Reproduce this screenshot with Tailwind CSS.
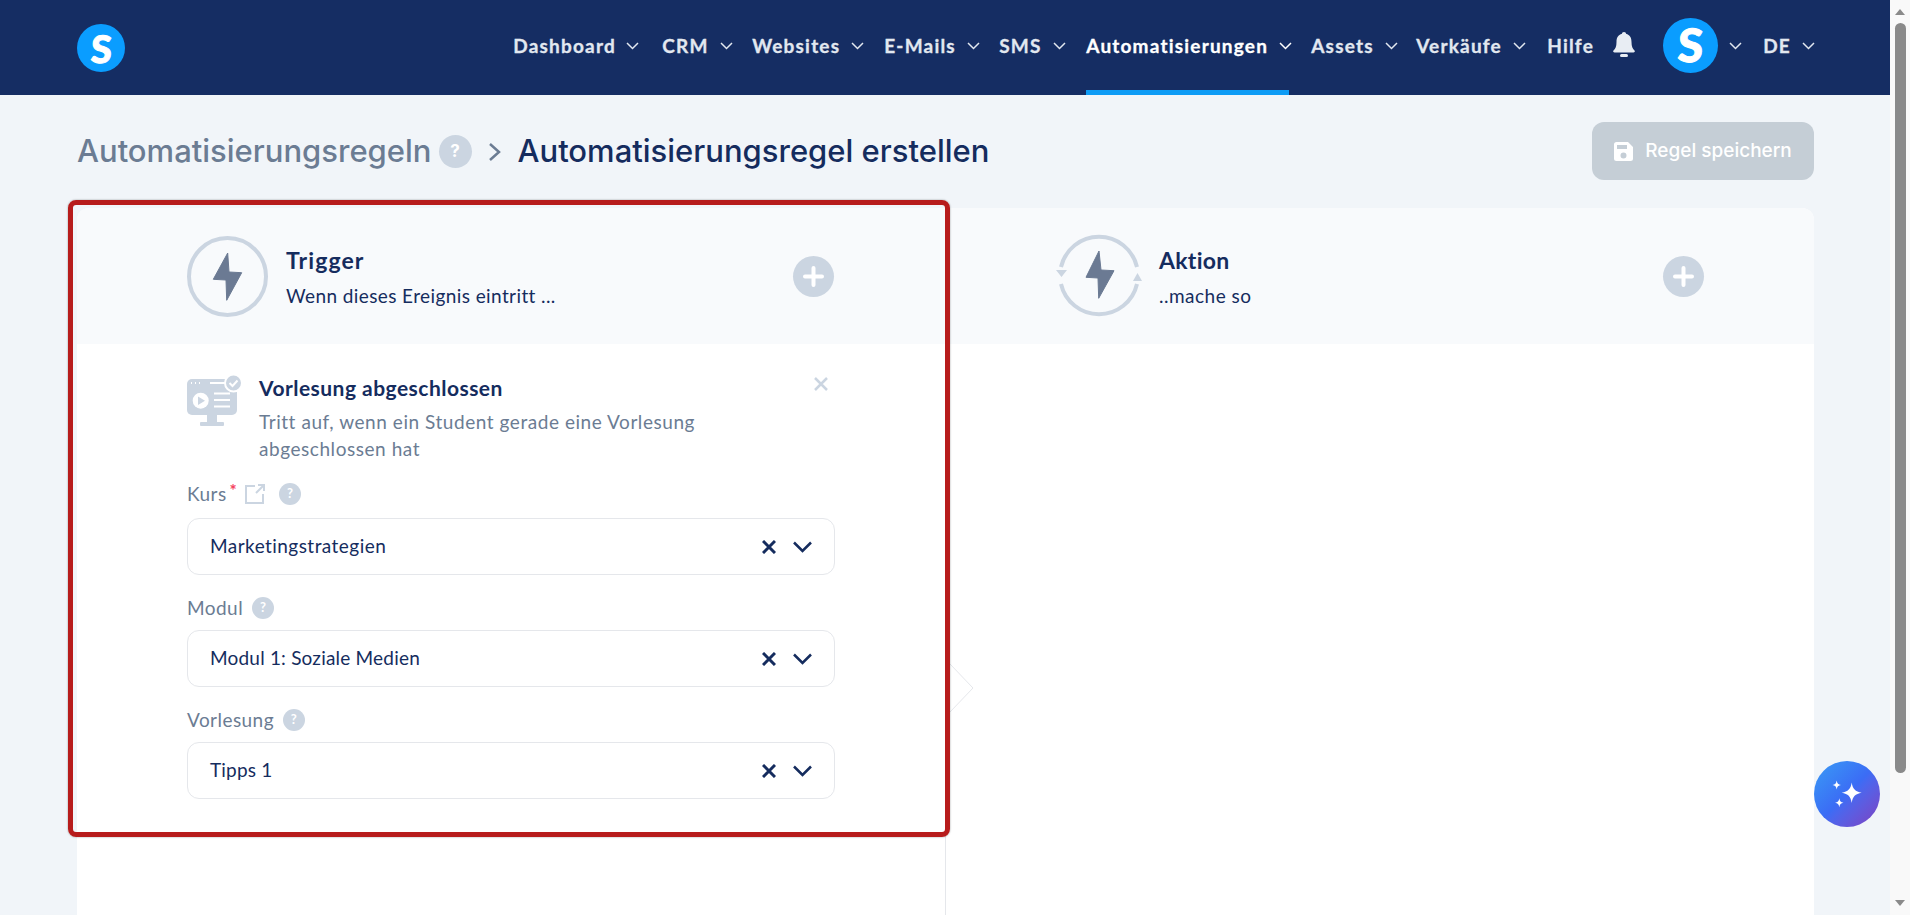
<!DOCTYPE html>
<html lang="de">
  <head>
    <meta charset="UTF-8" />
    <meta name="viewport" content="width=device-width, initial-scale=1.0" />
    <script src="https://cdn.jsdelivr.net/npm/@tailwindcss/browser@4"></script>
    <title>Automatisierungsregel erstellen</title>
  </head>
  <body class="h-screen overflow-hidden flex bg-[#f1f5f9] font-['Lato',sans-serif] text-[#152c5e]">
    <div class="relative flex-1 min-w-0 h-[915px] overflow-hidden">
      <!-- top nav -->
      <header class="h-[95px] bg-[#152d63] flex items-center justify-between pl-[77px] pr-[75px]">
        <div class="w-[48px] h-[48px] rounded-full bg-[#0a9dff] flex items-center justify-center text-white text-[38px] leading-none font-black [-webkit-text-stroke:1px_white]"><span class="-skew-x-3">S</span></div>
        <nav class="flex items-center h-full text-[19px] font-bold tracking-[1.2px] text-[#e2e8f0] [-webkit-text-stroke:0.3px_currentColor]">
          <a class="flex items-center w-[149px] -mt-[3px]">Dashboard<svg class="ml-[10px] w-[13px] h-[8px]" viewBox="0 0 13 8" fill="none" stroke="currentColor" stroke-width="1.5"><path d="M1 1l5.5 5.5L12 1" /></svg></a>
          <a class="flex items-center w-[90px] -mt-[3px]">CRM<svg class="ml-[11px] w-[13px] h-[8px]" viewBox="0 0 13 8" fill="none" stroke="currentColor" stroke-width="1.5"><path d="M1 1l5.5 5.5L12 1" /></svg></a>
          <a class="flex items-center w-[132px] -mt-[3px]">Websites<svg class="ml-[11px] w-[13px] h-[8px]" viewBox="0 0 13 8" fill="none" stroke="currentColor" stroke-width="1.5"><path d="M1 1l5.5 5.5L12 1" /></svg></a>
          <a class="flex items-center w-[115px] -mt-[3px]">E-Mails<svg class="ml-[11px] w-[13px] h-[8px]" viewBox="0 0 13 8" fill="none" stroke="currentColor" stroke-width="1.5"><path d="M1 1l5.5 5.5L12 1" /></svg></a>
          <a class="flex items-center w-[87px] -mt-[3px]">SMS<svg class="ml-[11px] w-[13px] h-[8px]" viewBox="0 0 13 8" fill="none" stroke="currentColor" stroke-width="1.5"><path d="M1 1l5.5 5.5L12 1" /></svg></a>
          <a class="relative flex items-center h-full w-[225px] text-white"><span class="flex items-center -mt-[3px]">Automatisierungen<svg class="ml-[11px] w-[13px] h-[8px]" viewBox="0 0 13 8" fill="none" stroke="currentColor" stroke-width="1.5"><path d="M1 1l5.5 5.5L12 1" /></svg></span><span class="absolute left-0 bottom-0 w-[203px] h-[5px] bg-[#0e9cf5]"></span></a>
          <a class="flex items-center w-[105px] -mt-[3px]">Assets<svg class="ml-[11px] w-[13px] h-[8px]" viewBox="0 0 13 8" fill="none" stroke="currentColor" stroke-width="1.5"><path d="M1 1l5.5 5.5L12 1" /></svg></a>
          <a class="flex items-center w-[131px] -mt-[3px]">Verkäufe<svg class="ml-[11px] w-[13px] h-[8px]" viewBox="0 0 13 8" fill="none" stroke="currentColor" stroke-width="1.5"><path d="M1 1l5.5 5.5L12 1" /></svg></a>
          <a class="w-[66px] -mt-[3px]">Hilfe</a>
          <svg class="w-[22px] h-[25px] -mt-[6px] text-[#e8edf3]" viewBox="0 0 22 25" fill="currentColor"><path d="M11 0c1.3 0 2 .8 2 1.8C17 2.8 18.5 6 18.5 10c0 4.5 1 6.5 3 8.500.7.8.3 2-1 2H1.5c-1.300 0-1.700-1.200-1-2 2-2 3-4 3-8.500C3.500 6 5 2.800 9 1.800 9 .8 9.700 0 11 0z" /><rect x="7" y="22" width="8" height="3" rx="1.5" /></svg>
          <div class="ml-[28px] -mt-[5px] w-[55px] h-[55px] rounded-full bg-[#0a9dff] flex items-center justify-center text-white text-[46px] leading-none font-black tracking-normal [-webkit-text-stroke:1px_white]"><span class="-skew-x-3">S</span></div>
          <svg class="ml-[11px] -mt-[3px] w-[13px] h-[8px]" viewBox="0 0 13 8" fill="none" stroke="currentColor" stroke-width="1.5"><path d="M1 1l5.5 5.5L12 1" /></svg>
          <a class="ml-[21px] -mt-[3px] flex items-center">DE<svg class="ml-[11px] w-[13px] h-[8px]" viewBox="0 0 13 8" fill="none" stroke="currentColor" stroke-width="1.5"><path d="M1 1l5.5 5.5L12 1" /></svg></a>
        </nav>
      </header>

      <main class="pl-[77px] pr-[76px]">
        <!-- title row -->
        <div class="h-[111px] mb-[2px] flex items-center justify-between font-['Inter',sans-serif]">
          <div class="flex items-center mt-[2px] text-[31px] font-medium">
            <span class="text-[#6b7c93]">Automatisierungsregeln</span>
            <span class="ml-[7px] w-[33px] h-[33px] rounded-full bg-[#cbd5e1] text-white text-[17px] font-bold flex items-center justify-center">?</span>
            <svg class="ml-[16px] w-[15px] h-[20px] text-[#6b7c93]" viewBox="0 0 15 20" fill="none" stroke="currentColor" stroke-width="2.5"><path d="M2 2l9 8-9 8" /></svg>
            <span class="ml-[15px] text-[#152c5e]">Automatisierungsregel erstellen</span>
          </div>
          <button class="w-[222px] h-[58px] pt-[2px] rounded-[12px] bg-[#c5ced6] text-white text-[19px] font-medium flex items-center justify-center gap-[12px]">
            <svg class="w-[19px] h-[19px]" viewBox="0 0 19 19" fill="currentColor"><path fill-rule="evenodd" d="M2.5 0H14l5 5v11.5a2.5 2.5 0 0 1-2.5 2.5h-14A2.5 2.5 0 0 1 0 16.5v-14A2.5 2.5 0 0 1 2.5 0zM3 3v4h10V3H3zm6.5 7.500a3 3 0 1 0 0 6 3 3 0 0 0 0-6z" /></svg>
            Regel speichern
          </button>
        </div>

        <!-- builder card -->
        <section class="h-[707px] bg-white rounded-t-[12px] grid grid-cols-[869px_1fr] overflow-hidden">
          <div class="border-r border-[#e5e7eb]">
            <div class="h-[136px] bg-[#f8fafc] flex items-center pl-[110px]">
              <svg class="w-[81px] h-[81px]" viewBox="0 0 81 81"><circle cx="40.5" cy="40.5" r="38.5" fill="none" stroke="#cbd5e1" stroke-width="4" /><path d="M40.7 17L26.3 43.3 39 44l.7 20.3 15-27.6L42 36z" fill="#6b7a93" stroke="#6b7a93" stroke-linejoin="round" /></svg>
              <div class="ml-[18px] w-[507px]">
                <div class="text-[23px] font-bold tracking-[1.1px] leading-[28px] mt-[1px]">Trigger</div>
                <div class="mt-[10px] text-[19px] tracking-[0.4px] leading-[24px]">Wenn dieses Ereignis eintritt ...</div>
              </div>
              <div class="w-[41px] h-[41px] rounded-full bg-[#cbd5e1] flex items-center justify-center">
                <svg class="w-[21px] h-[21px]" viewBox="0 0 21 21" stroke="white" stroke-width="4" stroke-linecap="round"><path d="M10.5 2v17M2 10.5h17" /></svg>
              </div>
            </div>
            <div class="pl-[110px] w-[758px]">
              <div class="pt-[30px] flex">
                <svg class="w-[55px] h-[53px] shrink-0" viewBox="0 0 55 53">
                  <rect x="0" y="5" width="50" height="36" rx="5" fill="#cbd5e1" />
                  <rect x="20" y="41" width="10" height="7" fill="#cbd5e1" />
                  <rect x="13" y="48" width="24" height="4" rx="1" fill="#cbd5e1" />
                  <path d="M4 9h1M8 9h1M12 9h1M23 9h16M27 19.5h16M27 26h16M27 32.5h16" stroke="white" stroke-width="2" />
                  <circle cx="13.7" cy="26.7" r="8" fill="white" />
                  <path d="M11 22.5l7 4.2-7 4.2z" fill="#cbd5e1" />
                  <circle cx="46.5" cy="9" r="8.5" fill="#cbd5e1" stroke="white" stroke-width="2" />
                  <path d="M42.5 9l3 3 5-5.5" fill="none" stroke="white" stroke-width="2" />
                </svg>
                <div class="ml-[17px] w-[480px]">
                  <h3 class="text-[21px] font-bold tracking-[0.47px] leading-[28px]">Vorlesung abgeschlossen</h3>
                  <p class="mt-[6px] text-[19px] tracking-[0.55px] leading-[27px] text-[#6b7c93]">Tritt auf, wenn ein Student gerade eine Vorlesung abgeschlossen hat</p>
                </div>
                <svg class="ml-auto mr-[7px] mt-[3px] w-[14px] h-[14px] shrink-0" viewBox="0 0 14 14" stroke="#cbd5e1" stroke-width="2.5"><path d="M1 1l12 12M13 1L1 13" /></svg>
              </div>

              <!-- fields -->
              <div class="w-[648px]">
                <div class="mt-[16px]">
                  <div class="h-[32px] flex items-center text-[19px] tracking-[0.45px] text-[#6b7c93]">
                    <span>Kurs</span><span class="text-[#f43f5e] text-[17px] font-bold ml-[3px] -mt-[6px]">*</span>
                    <svg class="ml-[8px] w-[20px] h-[20px]" viewBox="0 0 20 20" fill="none" stroke="#cbd5e1" stroke-width="2"><path d="M10 2H1v17h17v-9M11 9l8-8M13 1h6v6" /></svg>
                    <span class="ml-[14px] w-[22px] h-[22px] rounded-full bg-[#cbd5e1] text-white text-[13px] font-bold flex items-center justify-center">?</span>
                  </div>
                  <div class="mt-[8px] h-[57px] rounded-[12px] border border-[#e5e7eb] flex items-center pl-[22px] pr-[22px] text-[19px] tracking-[0.45px]">
                    <span class="flex-1">Marketingstrategien</span>
                    <svg class="w-[14px] h-[14px]" viewBox="0 0 14 14" stroke="#152c5e" stroke-width="3"><path d="M1 1l12 12M13 1L1 13" /></svg>
                    <svg class="ml-[17px] w-[19px] h-[12px]" viewBox="0 0 19 12" fill="none" stroke="#152c5e" stroke-width="2.5"><path d="M1 1.5l8.5 8.5L18 1.5" /></svg>
                  </div>
                </div>
                <div class="mt-[17px]">
                  <div class="h-[32px] flex items-center text-[19px] tracking-[0.45px] text-[#6b7c93]">
                    <span>Modul</span>
                    <span class="ml-[9px] w-[22px] h-[22px] rounded-full bg-[#cbd5e1] text-white text-[13px] font-bold flex items-center justify-center">?</span>
                  </div>
                  <div class="mt-[6px] h-[57px] rounded-[12px] border border-[#e5e7eb] flex items-center pl-[22px] pr-[22px] text-[19px] tracking-[0.2px]">
                    <span class="flex-1">Modul 1: Soziale Medien</span>
                    <svg class="w-[14px] h-[14px]" viewBox="0 0 14 14" stroke="#152c5e" stroke-width="3"><path d="M1 1l12 12M13 1L1 13" /></svg>
                    <svg class="ml-[17px] w-[19px] h-[12px]" viewBox="0 0 19 12" fill="none" stroke="#152c5e" stroke-width="2.5"><path d="M1 1.5l8.5 8.5L18 1.5" /></svg>
                  </div>
                </div>
                <div class="mt-[17px]">
                  <div class="h-[32px] flex items-center text-[19px] tracking-[0.45px] text-[#6b7c93]">
                    <span>Vorlesung</span>
                    <span class="ml-[9px] w-[22px] h-[22px] rounded-full bg-[#cbd5e1] text-white text-[13px] font-bold flex items-center justify-center">?</span>
                  </div>
                  <div class="mt-[6px] h-[57px] rounded-[12px] border border-[#e5e7eb] flex items-center pl-[22px] pr-[22px] text-[19px] tracking-[0.2px]">
                    <span class="flex-1">Tipps 1</span>
                    <svg class="w-[14px] h-[14px]" viewBox="0 0 14 14" stroke="#152c5e" stroke-width="3"><path d="M1 1l12 12M13 1L1 13" /></svg>
                    <svg class="ml-[17px] w-[19px] h-[12px]" viewBox="0 0 19 12" fill="none" stroke="#152c5e" stroke-width="2.5"><path d="M1 1.5l8.5 8.5L18 1.5" /></svg>
                  </div>
                </div>
              </div>
            </div>
          </div>

          <div>
            <div class="h-[136px] bg-[#f8fafc] flex items-center pl-[110px]">
              <svg class="w-[86px] h-[84px]" viewBox="0 0 86 84">
                <path d="M5 33A39 39 0 0 1 81 33M5 50A39 39 0 0 0 81 50" fill="none" stroke="#cbd5e1" stroke-width="4" />
                <path d="M0 36h11l-5.5 7zM77 47h9l-4.5-8z" fill="#cbd5e1" />
                <path d="M43 17L30 43.3 42 44l.7 20.3L58 36.7 45 36z" fill="#6b7a93" stroke="#6b7a93" stroke-linejoin="round" />
              </svg>
              <div class="ml-[17px] w-[504px]">
                <div class="text-[23px] font-bold tracking-[0.3px] leading-[28px] mt-[1px]">Aktion</div>
                <div class="mt-[10px] text-[19px] tracking-[0.5px] leading-[24px]">..mache so</div>
              </div>
              <div class="w-[41px] h-[41px] rounded-full bg-[#cbd5e1] flex items-center justify-center">
                <svg class="w-[21px] h-[21px]" viewBox="0 0 21 21" stroke="white" stroke-width="4" stroke-linecap="round"><path d="M10.5 2v17M2 10.5h17" /></svg>
              </div>
            </div>
          </div>
        </section>
      </main>

      <!-- arrow between the panels -->
      <svg class="absolute left-[950px] top-[663px] w-[24px] h-[50px]" viewBox="0 0 24 50" fill="white" stroke="#e5e7eb"><path d="M0 1l23 24L0 49" /></svg>
      <!-- red highlight -->
      <div class="absolute left-[68px] top-[200px] w-[882px] h-[637px] border-[5px] border-[#b71c1c] rounded-[8px] shadow-[0_0_2px_rgba(0,0,0,0.4)]"></div>
      <!-- assistant button -->
      <button class="absolute left-[1814px] top-[761px] w-[66px] h-[66px] rounded-full bg-gradient-to-br from-[#3b9bf5] via-[#3b6cf5] to-[#7a3fc0]">
        <svg class="w-[66px] h-[66px]" viewBox="0 0 66 66" fill="white"><path d="M37.7 21.5c1 6.5 3.5 9 10 10.200-6.500 1.200-9 3.700-10 10.300-1-6.600-3.500-9.100-10-10.300 6.500-1.200 9-3.700 10-10.200zM22.700 19.500c.5 3 1.500 4 4.200 4.500-2.700.5-3.700 1.500-4.200 4.500-.5-3-1.500-4-4.200-4.500 2.700-.5 3.700-1.500 4.200-4.500zM25.300 37.200c.5 3 1.500 4 4.200 4.500-2.700.5-3.700 1.500-4.200 4.500-.5-3-1.500-4-4.200-4.500 2.700-.5 3.700-1.500 4.200-4.500z" /></svg>
      </button>
    </div>

    <!-- page scrollbar -->
    <aside class="w-[20px] h-[915px] bg-[#f9f9f9] relative shrink-0">
      <div class="absolute left-[5px] top-[9px] w-0 h-0 border-x-[5px] border-x-transparent border-b-[6px] border-b-[#8a8a8a]"></div>
      <div class="absolute left-[5px] top-[23px] w-[11px] h-[750px] rounded-full bg-[#8a8a8a]"></div>
      <div class="absolute left-[5px] top-[900px] w-0 h-0 border-x-[5px] border-x-transparent border-t-[6px] border-t-[#8a8a8a]"></div>
    </aside>
  </body>
</html>
